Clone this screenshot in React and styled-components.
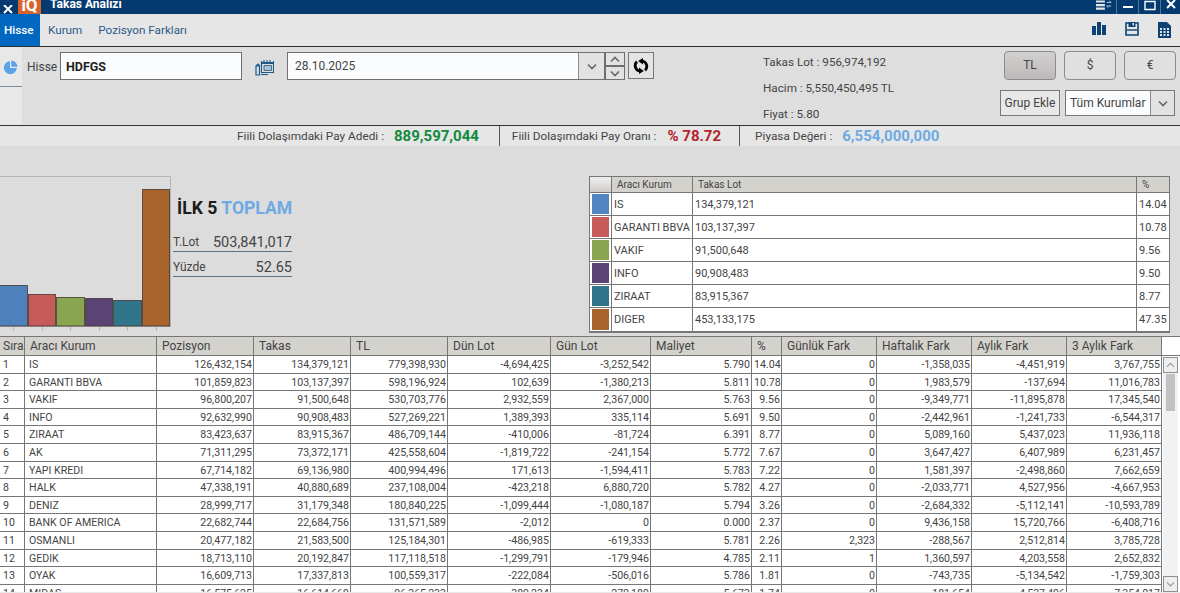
import styled, { createGlobalStyle } from "styled-components";

const GlobalStyle = createGlobalStyle`
  html, body {
    margin: 0;
    padding: 0;
    background: #e8e8e8;
    font-family: Roboto, "Noto Sans", sans-serif;
    color: #333;
  }
  * { box-sizing: border-box; }
`;

const Page = styled.div`
  width: 1180px;
  height: 593px;
  overflow: hidden;
  display: flex;
  flex-direction: column;
`;

/* title bar, the window is cut off at the top */
const TitleBar = styled.div`
  height: 14px;
  flex: none;
  background: #053a70;
  display: flex;
  align-items: flex-start;
  overflow: hidden;
`;

const Logo = styled.div`
  width: 23px;
  height: 14px;
  background: #d9642a;
  color: #fff;
  font-weight: 700;
  font-size: 17px;
  line-height: 10px;
  text-align: center;
`;

const Title = styled.div`
  margin-left: 9px;
  color: #fff;
  font-size: 12px;
  font-weight: 700;
  line-height: 9px;
  flex: 1;
`;

const WinButton = styled.div`
  width: ${(p) => p.$w}px;
  height: 14px;
  display: flex;
  align-items: flex-start;
  justify-content: center;
  border-left: ${(p) => (p.$line ? "1px solid #4d769c" : "none")};
`;

const CloseBox = styled.div`
  width: 18px;
  height: 14px;
  padding: 0 0 0 3px;
`;

const TabBar = styled.div`
  height: 33px;
  flex: none;
  background: #e6e6e6;
  border-bottom: 1px solid #2e2e2e;
  display: flex;
  align-items: stretch;
`;

const Tab = styled.div`
  padding: 0 ${(p) => (p.$active ? "4px" : "8px")};
  min-width: ${(p) => (p.$active ? "40px" : "0")};
  display: flex;
  align-items: center;
  font-size: 11.7px;
  color: ${(p) => (p.$active ? "#fff" : "#2c5a88")};
  background: ${(p) => (p.$active ? "#0068c0" : "transparent")};
  font-weight: ${(p) => (p.$active ? 500 : 400)};
`;

const TabIcons = styled.div`
  margin-left: auto;
  padding: 8px 9px 0 0;
  display: flex;
  gap: 19px;
  align-items: flex-start;
`;

const Toolbar = styled.div`
  height: 79px;
  flex: none;
  background: #dedede;
  border-bottom: 1px solid #333;
  display: flex;
`;

const SideStrip = styled.div`
  width: 22px;
  flex: none;
  background: #e8e8e8;
`;

const SideTab = styled.div`
  height: 40px;
  border-bottom: 1px solid #7c8a99;
  padding: 13px 0 0 3px;
`;

const SearchArea = styled.div`
  width: 733px;
  flex: none;
  padding: 5px 0 0 5px;
  display: flex;
  align-items: flex-start;
`;

const FieldLabel = styled.div`
  font-size: 12px;
  width: 33px;
  line-height: 28px;
  padding-top: 1px;
  color: #444;
`;

const TextField = styled.div`
  width: 182px;
  height: 28px;
  background: #fbfcfd;
  border: 1px solid #6f6f6f;
  padding-left: 5px;
  font-size: 12.5px;
  font-weight: 700;
  line-height: 27px;
  color: #222;
`;

const CalendarSlot = styled.div`
  width: 45px;
  padding: 8px 0 0 13px;
`;

const DateField = styled.div`
  width: 318px;
  height: 28px;
  background: #fbfcfd;
  border: 1px solid #6f6f6f;
  display: flex;
  font-size: 12px;
  line-height: 27px;
  color: #444;
`;

const DateText = styled.div`
  flex: 1;
  padding-left: 7px;
`;

const ArrowBox = styled.div`
  width: ${(p) => p.$w || 26}px;
  flex: none;
  background: #e2e2e2;
  border-left: 1px solid #8a8a8a;
  display: flex;
  align-items: center;
  justify-content: center;
`;

const Spinner = styled.div`
  width: 20px;
  height: 28px;
  flex: none;
  border: 1px solid #6f6f6f;
  display: flex;
  flex-direction: column;
  background: #e2e2e2;
`;

const SpinPart = styled.div`
  flex: 1;
  display: flex;
  align-items: center;
  justify-content: center;
  & + & {
    border-top: 2px solid #6f6f6f;
  }
`;

const RefreshButton = styled.div`
  width: 26px;
  height: 27px;
  margin-left: 3px;
  background: #e4e4e4;
  border: 1px solid #777;
  display: flex;
  align-items: center;
  justify-content: center;
`;

const InfoBlock = styled.div`
  width: 245px;
  flex: none;
  padding: 2px 0 0 8px;
  font-size: 11.7px;
  color: #444;
`;

const InfoLine = styled.div`
  height: 26px;
  line-height: 26px;
`;

const RightControls = styled.div`
  flex: 1;
  padding: 4px 0 0 0;
  display: flex;
  flex-direction: column;
`;

const CurrencyRow = styled.div`
  display: flex;
  gap: 8px;
  padding-left: 4px;
`;

const CurrencyButton = styled.div`
  width: 52px;
  height: 29px;
  border: 1px solid #8c8c8c;
  border-radius: 4px;
  font-size: 12px;
  color: #444;
  text-align: center;
  line-height: 27px;
  background: ${(p) =>
    p.$active ? "linear-gradient(#d3d0d0, #bdb9b9)" : "#e0e0e0"};
`;

const GroupRow = styled.div`
  display: flex;
  margin-top: 10px;
  gap: 5px;
`;

const GroupButton = styled.div`
  width: 60px;
  height: 26px;
  background: #e8e8e8;
  border: 1px solid #777;
  font-size: 12px;
  text-align: center;
  line-height: 24px;
  color: #444;
`;

const GroupSelect = styled.div`
  width: 110px;
  height: 26px;
  background: #fbfcfd;
  border: 1px solid #777;
  font-size: 12px;
  line-height: 24px;
  color: #444;
  display: flex;
`;

const GroupText = styled.div`
  flex: 1;
  padding-left: 4px;
`;

const StatBar = styled.div`
  height: 20px;
  flex: none;
  background: #e6e6e6;
  padding-left: 237px;
  display: flex;
  align-items: center;
  font-size: 11.8px;
  color: #444;
`;

const StatLabel = styled.div`
  white-space: nowrap;
`;

const StatValue = styled.div`
  margin-left: ${(p) => p.$gap}px;
  font-size: 15px;
  font-weight: 700;
  color: ${(p) => p.$color};
  white-space: nowrap;
`;

const StatRule = styled.div`
  width: 1px;
  height: 20px;
  background: #555;
  margin: 0 ${(p) => p.$right}px 0 ${(p) => p.$left}px;
`;

const Middle = styled.div`
  height: 190px;
  flex: none;
  background: #dcdcdc;
  padding-top: 30px;
  display: flex;
  align-items: flex-start;
`;

const Chart = styled.svg`
  width: 172px;
  height: 156px;
  flex: none;
  display: block;
`;

const Summary = styled.div`
  width: 119px;
  margin-left: 1px;
  flex: none;
  padding-top: 21px;
`;

const SummaryTitle = styled.div`
  font-size: 17.6px;
  font-weight: 700;
  padding-left: 4px;
  color: #1c1c1c;
  line-height: 22px;
  height: 30px;
  white-space: nowrap;
  span {
    color: #6eaae4;
  }
`;

const SummaryRow = styled.div`
  height: 25px;
  display: flex;
  justify-content: space-between;
  align-items: flex-end;
  border-bottom: 1px solid #5c6f82;
  font-size: 14.5px;
  line-height: 16px;
  color: #444;
  small {
    font-size: 12px;
    line-height: 18px;
  }
`;

const Legend = styled.div`
  margin-left: 297px;
  width: 581px;
  border: 1px solid #777;
  border-bottom: 2px solid #777;
  background: #fff;
  color: #444;
`;

const LegendRow = styled.div`
  display: grid;
  grid-template-columns: 22px 81px 444px 1fr;
  height: ${(p) => (p.$head ? "16px" : "23px")};
  background: ${(p) => (p.$head ? "#d4d2cd" : "#fff")};
  font-size: ${(p) => (p.$head ? "10px" : "11px")};
  &:not(:last-child) {
    border-bottom: 1px solid #777;
  }
`;

const LegendCell = styled.div`
  padding-left: ${(p) => (p.$head ? 5 : 2)}px;
  white-space: nowrap;
  overflow: hidden;
  line-height: ${(p) => (p.$head ? "15px" : "24px")};
  &:not(:last-child) {
    border-right: 1px solid #777;
  }
`;

const Swatch = styled.div`
  border-right: 1px solid #777;
  padding: 1px 2px;
  background: ${(p) =>
    p.$head ? "linear-gradient(#eeeeee, #cfcdc8)" : "#fff"};
  &::before {
    content: "";
    display: ${(p) => (p.$head ? "none" : "block")};
    width: 100%;
    height: 100%;
    background: ${(p) => p.$color};
  }
`;

const TableWrap = styled.div`
  flex: 1;
  min-height: 0;
  display: flex;
  flex-direction: column;
  background: #fff;
  border-bottom: 1px solid #e8e8e8;
  overflow: hidden;
`;

const cols = "25px 132px 97px 97px 97px 103px 100px 101px 30px 95px 95px 95px 95px";

const HeadRow = styled.div`
  display: grid;
  grid-template-columns: ${cols};
  height: 20px;
  flex: none;
  border-top: 1px solid #777;
  border-bottom: 1px solid #777;
`;

const HeadCell = styled.div`
  background: #d4d2cd;
  border-right: 1px solid #777;
  font-size: 12px;
  line-height: 18px;
  padding-left: ${(p) => p.$pad ?? 5}px;
  color: #444;
  white-space: nowrap;
  overflow: hidden;
`;

const BodyArea = styled.div`
  flex: 1;
  min-height: 0;
  display: flex;
`;

const Rows = styled.div`
  width: 1162px;
  flex: none;
  overflow: hidden;
`;

const Row = styled.div`
  display: grid;
  grid-template-columns: ${cols};
  height: 17.6px;
  border-bottom: 1px solid #777;
`;

const Cell = styled.div`
  border-right: 1px solid #777;
  font-size: 10.6px;
  line-height: 17px;
  padding: 0 1px 0 ${(p) => p.$pad ?? 2}px;
  text-align: ${(p) => (p.$left ? "left" : "right")};
  color: #444;
  white-space: nowrap;
  overflow: hidden;
`;

const ScrollBar = styled.div`
  flex: 1;
  display: flex;
  flex-direction: column;
  padding: 1px 2px 0 1px;
  background: #fff;
`;

const ScrollButton = styled.div`
  height: 16px;
  flex: none;
  border: 1px solid #8f8f8f;
  background: #eee;
  display: flex;
  align-items: center;
  justify-content: center;
`;

const ScrollTrack = styled.div`
  flex: 1;
  background: #f2f2f2;
  padding: 1px 3px 0;
`;

const ScrollThumb = styled.div`
  height: 37px;
  background: #c4c0c0;
`;

const Chevron = ({ up, size = 10, color = "#666", weight = 1.6 }) => (
  <svg width={size} height={size * 0.7} viewBox="0 0 10 7">
    <path
      d={up ? "M1 5.5 5 1.5 9 5.5" : "M1 1.5 5 5.5 9 1.5"}
      fill="none"
      stroke={color}
      strokeWidth={weight}
    />
  </svg>
);

const CloseIcon = () => (
  <svg width="10" height="10" viewBox="0 0 10 10">
    <path d="M1 0 9 8M9 0 1 8" stroke="#fff" strokeWidth="2" />
  </svg>
);

const ListIcon = () => (
  <svg width="16" height="12" viewBox="0 0 18 12">
    <path d="M0 1h10M0 5h10M0 9h10" stroke="#e6e6e6" strokeWidth="2.4" />
    <path d="M12 2h5M15 0l2 2M12 6h5M14 8l-2-2" stroke="#c8d4df" strokeWidth="1" fill="none" />
  </svg>
);

const BarsIcon = () => (
  <svg width="14" height="13" viewBox="0 0 14 13">
    <path d="M0 4h4v9H0zM5 0h4v13H5zM10 3h4v10h-4z" fill="#0d4273" />
  </svg>
);

const SaveIcon = () => (
  <svg width="14" height="14" viewBox="0 0 14 14">
    <path d="M1 1h12v12H1z" fill="none" stroke="#0d4273" strokeWidth="1.6" />
    <path d="M3.5 0h7v5h-7z" fill="#0d4273" />
    <path d="M7.5 1h1.5v2.6H7.5z" fill="#e6e6e6" />
    <path d="M2 8h10" stroke="#0d4273" strokeWidth="1.4" />
  </svg>
);

const SheetIcon = () => (
  <svg width="13" height="16" viewBox="0 0 13 16">
    <path d="M0 0h9l4 4v12H0z" fill="#0d4273" />
    <path
      d="M2 6h2v2H2zM5.5 6h2v2h-2zM9 6h2v2H9zM2 9h2v2H2zM5.5 9h2v2h-2zM9 9h2v2H9zM2 12h2v2H2zM5.5 12h2v2h-2zM9 12h2v2H9z"
      fill="#dfe5ea"
    />
  </svg>
);

const PieIcon = () => (
  <svg width="15" height="15" viewBox="0 0 15 15">
    <path d="M7 1.2V8h6.8A6.5 6.5 0 1 1 7 1.2z" fill="#5aa3e6" />
    <path d="M8.3 0.5a6.5 6.5 0 0 1 6.2 6.2H8.3z" fill="#5aa3e6" />
  </svg>
);

const CalendarIcon = () => (
  <svg width="19" height="16" viewBox="0 0 19 16" fill="none" stroke="#1d5a88">
    <path d="M6.5 2.5h12v10h-12z" strokeWidth="1.1" />
    <path d="M6.5 1v2.5h12V1M9 0v3M12 0v3M15 0v3" strokeWidth="1.1" />
    <path d="M9 5.5h7.5v5H9z" strokeWidth="0.8" fill="#a9c1d4" />
    <path d="M1 6h3.5v9H1zM1 6l2-2 2 2" strokeWidth="1.2" />
    <path d="M6 14.5h7" strokeWidth="1.1" />
  </svg>
);

const RefreshIcon = () => (
  <svg width="16" height="16" viewBox="0 0 16 16">
    <path
      d="M4 3.6A5.5 5.5 0 0 0 6.5 13M12 12.4A5.5 5.5 0 0 0 9.5 3"
      fill="none"
      stroke="#000"
      strokeWidth="2.8"
    />
    <path d="M6 9.6V16L10.8 13zM10 0V6.4L5.2 3z" fill="#000" />
  </svg>
);

const bars = [
  { x: -10, y: 109, w: 37, color: "#4f81bd" },
  { x: 28, y: 118, w: 27, color: "#c75b59" },
  { x: 56, y: 121, w: 28, color: "#8aa54f" },
  { x: 85, y: 122, w: 27, color: "#5a4473" },
  { x: 113, y: 124, w: 28, color: "#31758a" },
  { x: 142, y: 13, w: 27, color: "#a8642b" },
];

const legend = [
  ["IS", "134,379,121", "14.04", "#5385c2"],
  ["GARANTI BBVA", "103,137,397", "10.78", "#c75b59"],
  ["VAKIF", "91,500,648", "9.56", "#8aa54f"],
  ["INFO", "90,908,483", "9.50", "#5a4473"],
  ["ZIRAAT", "83,915,367", "8.77", "#31758a"],
  ["DIGER", "453,133,175", "47.35", "#a8642b"],
];

const headers = [
  "Sıra", "Aracı Kurum", "Pozisyon", "Takas", "TL", "Dün Lot", "Gün Lot",
  "Maliyet", "%", "Günlük Fark", "Haftalık Fark", "Aylık Fark", "3 Aylık Fark",
];

const rows = [
  ["1", "IS", "126,432,154", "134,379,121", "779,398,930", "-4,694,425", "-3,252,542", "5.790", "14.04", "0", "-1,358,035", "-4,451,919", "3,767,755"],
  ["2", "GARANTI BBVA", "101,859,823", "103,137,397", "598,196,924", "102,639", "-1,380,213", "5.811", "10.78", "0", "1,983,579", "-137,694", "11,016,783"],
  ["3", "VAKIF", "96,800,207", "91,500,648", "530,703,776", "2,932,559", "2,367,000", "5.763", "9.56", "0", "-9,349,771", "-11,895,878", "17,345,540"],
  ["4", "INFO", "92,632,990", "90,908,483", "527,269,221", "1,389,393", "335,114", "5.691", "9.50", "0", "-2,442,961", "-1,241,733", "-6,544,317"],
  ["5", "ZIRAAT", "83,423,637", "83,915,367", "486,709,144", "-410,006", "-81,724", "6.391", "8.77", "0", "5,089,160", "5,437,023", "11,936,118"],
  ["6", "AK", "71,311,295", "73,372,171", "425,558,604", "-1,819,722", "-241,154", "5.772", "7.67", "0", "3,647,427", "6,407,989", "6,231,457"],
  ["7", "YAPI KREDI", "67,714,182", "69,136,980", "400,994,496", "171,613", "-1,594,411", "5.783", "7.22", "0", "1,581,397", "-2,498,860", "7,662,659"],
  ["8", "HALK", "47,338,191", "40,880,689", "237,108,004", "-423,218", "6,880,720", "5.782", "4.27", "0", "-2,033,771", "4,527,956", "-4,667,953"],
  ["9", "DENIZ", "28,999,717", "31,179,348", "180,840,225", "-1,099,444", "-1,080,187", "5.794", "3.26", "0", "-2,684,332", "-5,112,141", "-10,593,789"],
  ["10", "BANK OF AMERICA", "22,682,744", "22,684,756", "131,571,589", "-2,012", "0", "0.000", "2.37", "0", "9,436,158", "15,720,766", "-6,408,716"],
  ["11", "OSMANLI", "20,477,182", "21,583,500", "125,184,301", "-486,985", "-619,333", "5.781", "2.26", "2,323", "-288,567", "2,512,814", "3,785,728"],
  ["12", "GEDIK", "18,713,110", "20,192,847", "117,118,518", "-1,299,791", "-179,946", "4.785", "2.11", "1", "1,360,597", "4,203,558", "2,652,832"],
  ["13", "OYAK", "16,609,713", "17,337,813", "100,559,317", "-222,084", "-506,016", "5.786", "1.81", "0", "-743,735", "-5,134,542", "-1,759,303"],
  ["14", "MIDAS", "16,575,625", "16,614,669", "96,365,233", "-389,234", "-270,189", "5.673", "1.74", "0", "181,654", "4,537,496", "7,354,017"],
];

const App = () => {
  return (
    <Page>
      <GlobalStyle />
      <TitleBar>
        <CloseBox>
          <CloseIcon />
        </CloseBox>
        <Logo>iQ</Logo>
        <Title>Takas Analizi</Title>
        <WinButton $w={25}>
          <ListIcon />
        </WinButton>
        <WinButton $w={22} $line>
          <svg width="10" height="10" viewBox="0 0 10 10">
            <path d="M0 7h10" stroke="#fff" strokeWidth="2" />
          </svg>
        </WinButton>
        <WinButton $w={22} $line>
          <svg width="12" height="11" viewBox="0 0 12 11">
            <path d="M1 1.5h10v8H1z" fill="none" stroke="#fff" strokeWidth="1.4" />
          </svg>
        </WinButton>
        <WinButton $w={20} $line>
          <CloseIcon />
        </WinButton>
      </TitleBar>

      <TabBar>
        <Tab $active>Hisse</Tab>
        <Tab>Kurum</Tab>
        <Tab>Pozisyon Farkları</Tab>
        <TabIcons>
          <BarsIcon />
          <SaveIcon />
          <SheetIcon />
        </TabIcons>
      </TabBar>

      <Toolbar>
        <SideStrip>
          <SideTab>
            <PieIcon />
          </SideTab>
        </SideStrip>
        <SearchArea>
          <FieldLabel>Hisse</FieldLabel>
          <TextField>HDFGS</TextField>
          <CalendarSlot>
            <CalendarIcon />
          </CalendarSlot>
          <DateField>
            <DateText>28.10.2025</DateText>
            <ArrowBox>
              <Chevron />
            </ArrowBox>
          </DateField>
          <Spinner>
            <SpinPart>
              <Chevron up />
            </SpinPart>
            <SpinPart>
              <Chevron />
            </SpinPart>
          </Spinner>
          <RefreshButton>
            <RefreshIcon />
          </RefreshButton>
        </SearchArea>
        <InfoBlock>
          <InfoLine>Takas Lot : 956,974,192</InfoLine>
          <InfoLine>Hacim : 5,550,450,495 TL</InfoLine>
          <InfoLine>Fiyat : 5.80</InfoLine>
        </InfoBlock>
        <RightControls>
          <CurrencyRow>
            <CurrencyButton $active>TL</CurrencyButton>
            <CurrencyButton>$</CurrencyButton>
            <CurrencyButton>€</CurrencyButton>
          </CurrencyRow>
          <GroupRow>
            <GroupButton>Grup Ekle</GroupButton>
            <GroupSelect>
              <GroupText>Tüm Kurumlar</GroupText>
              <ArrowBox $w={24}>
                <Chevron />
              </ArrowBox>
            </GroupSelect>
          </GroupRow>
        </RightControls>
      </Toolbar>

      <StatBar>
        <StatLabel>Fiili Dolaşımdaki Pay Adedi :</StatLabel>
        <StatValue $gap={10} $color="#128a3e">889,597,044</StatValue>
        <StatRule $left={20} $right={12} />
        <StatLabel>Fiili Dolaşımdaki Pay Oranı :</StatLabel>
        <StatValue $gap={11} $color="#b3232a">% 78.72</StatValue>
        <StatRule $left={18} $right={15} />
        <StatLabel>Piyasa Değeri :</StatLabel>
        <StatValue $gap={10} $color="#6eaae4">6,554,000,000</StatValue>
      </StatBar>

      <Middle>
        <Chart viewBox="0 0 172 156">
          <path d="M0 0.5H170.5V150.5H0" fill="none" stroke="#b4b4b4" />
          {[13, 42, 70, 99, 127, 156].map((x) => (
            <path key={x} d={`M${x + 0.5} 151V155`} stroke="#b4b4b4" />
          ))}
          {bars.map((b) => (
            <rect
              key={b.color}
              x={b.x + 0.5}
              y={b.y + 0.5}
              width={b.w}
              height={149.5 - b.y}
              fill={b.color}
              stroke="#3a2e28"
              strokeOpacity="0.75"
            />
          ))}
        </Chart>
        <Summary>
          <SummaryTitle>
            İLK 5 <span>TOPLAM</span>
          </SummaryTitle>
          <SummaryRow>
            <small>T.Lot</small>
            <div>503,841,017</div>
          </SummaryRow>
          <SummaryRow>
            <small>Yüzde</small>
            <div>52.65</div>
          </SummaryRow>
        </Summary>
        <Legend>
          <LegendRow $head>
            <Swatch $head />
            <LegendCell $head>Aracı Kurum</LegendCell>
            <LegendCell $head>Takas Lot</LegendCell>
            <LegendCell $head>%</LegendCell>
          </LegendRow>
          {legend.map(([name, lot, pct, color]) => (
            <LegendRow key={name}>
              <Swatch $color={color} />
              <LegendCell>{name}</LegendCell>
              <LegendCell>{lot}</LegendCell>
              <LegendCell>{pct}</LegendCell>
            </LegendRow>
          ))}
        </Legend>
      </Middle>

      <TableWrap>
        <HeadRow>
          {headers.map((h, i) => (
            <HeadCell key={h} $pad={i === 0 ? 3 : 5}>
              {h}
            </HeadCell>
          ))}
        </HeadRow>
        <BodyArea>
          <Rows>
            {rows.map((r) => (
              <Row key={r[0]}>
                {r.map((v, i) => (
                  <Cell key={i} $left={i < 2} $pad={i === 0 ? 3 : i === 1 ? 4 : 2}>
                    {v}
                  </Cell>
                ))}
              </Row>
            ))}
          </Rows>
          <ScrollBar>
            <ScrollButton>
              <Chevron up size={9} color="#999" weight={1.2} />
            </ScrollButton>
            <ScrollTrack>
              <ScrollThumb />
            </ScrollTrack>
            <ScrollButton>
              <Chevron size={9} color="#999" weight={1.2} />
            </ScrollButton>
          </ScrollBar>
        </BodyArea>
      </TableWrap>
    </Page>
  );
};

export default App;
